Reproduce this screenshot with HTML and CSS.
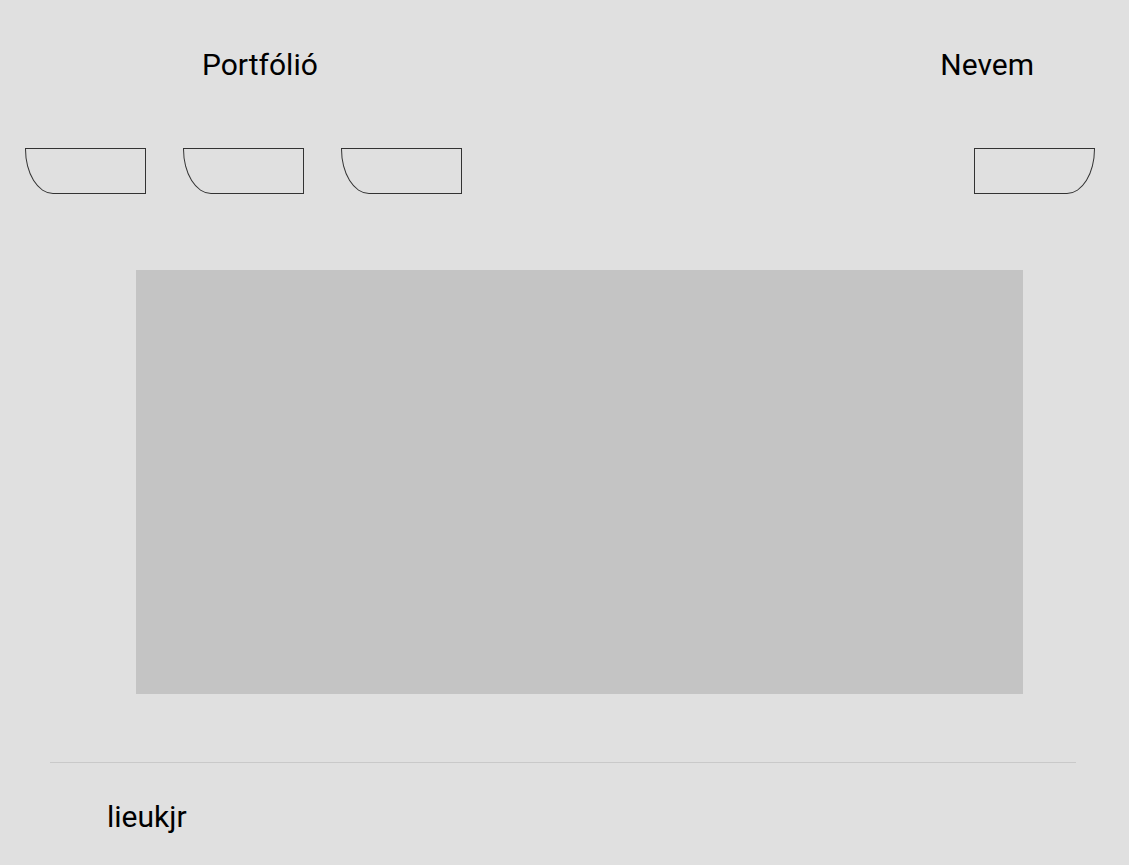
FILE: index.html
```html
<!DOCTYPE html>
<html lang="hu">
<head>
<meta charset="utf-8">
<title>Portfólió</title>
<link rel="stylesheet" href="styles.css">
</head>
<body>
<header class="top">
  <div class="title">Portfólió</div>
  <div class="name">Nevem</div>
</header>
<nav class="tabs">
  <div class="tab tab-left"></div>
  <div class="tab tab-left"></div>
  <div class="tab tab-left"></div>
  <div class="spacer"></div>
  <div class="tab tab-right"></div>
</nav>
<main class="content">
  <div class="hero"></div>
</main>
<hr class="rule">
<footer class="foot">lieukjr</footer>
</body>
</html>
```
FILE: styles.css
```css
html, body {
  margin: 0;
  padding: 0;
  background: #e0e0e0;
}
body {
  font-family: Roboto, "Liberation Sans", sans-serif;
  color: #000;
  width: 1129px;
  height: 865px;
  overflow: hidden;
}
.top {
  display: flex;
  justify-content: space-between;
  padding: 47px 95px 0 202px;
  font-size: 30px;
  line-height: 35px;
}
.tabs {
  display: flex;
  gap: 37px;
  padding: 66px 34px 0 25px;
}
.tab {
  width: 121px;
  height: 46px;
  box-sizing: border-box;
  border: 1px solid #333;
}
.tab-left { border-bottom-left-radius: 28px 45px; }
.tab-right { border-bottom-right-radius: 28px 45px; }
.spacer { flex: 1; }
.content {
  padding: 76px 0 0 136px;
}
.hero {
  width: 887px;
  height: 424px;
  background: #c4c4c4;
}
.rule {
  margin: 68px 0 0 50px;
  width: 1026px;
  border: 0;
  border-top: 1px solid #c9c9c9;
  height: 0;
}
.foot {
  padding: 36px 0 0 107px;
  font-size: 30px;
  line-height: 35px;
}
```
